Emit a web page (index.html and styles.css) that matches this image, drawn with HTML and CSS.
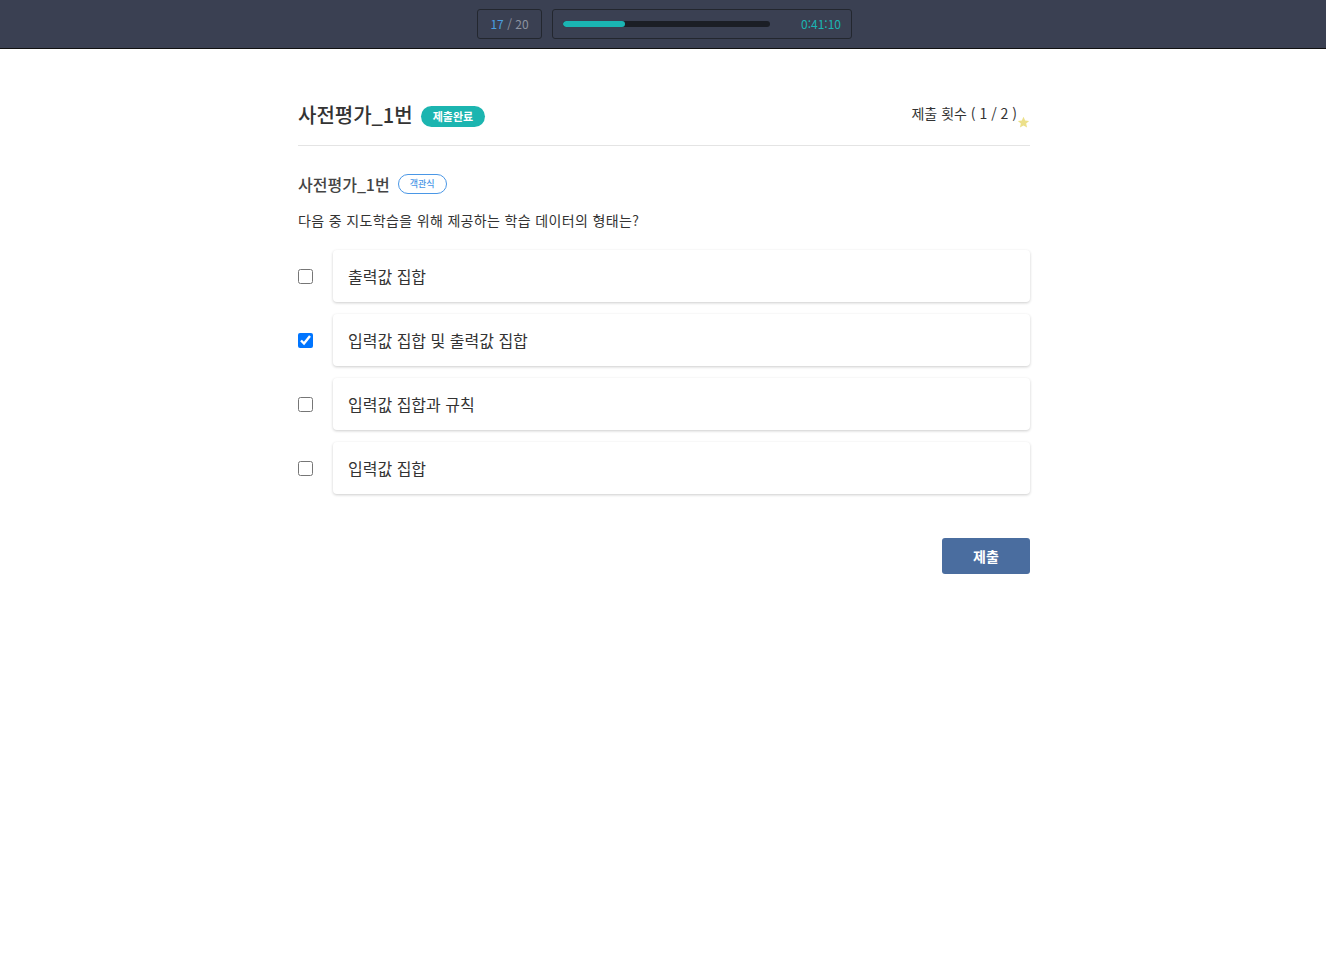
FILE: index.html
```html
<!DOCTYPE html>
<html lang="ko">
<head>
<meta charset="utf-8">
<link rel="stylesheet" href="styles.css">
</head>
<body>
<header class="topbar">
  <div class="counter"><span class="cur">17</span> / 20</div>
  <div class="progress">
    <div class="track"><div class="fill" style="width:30%"></div></div>
    <span class="timer">0:41:10</span>
  </div>
</header>
<main class="page">
  <div class="head">
    <div class="title-wrap">
      <h1 class="title">사전평가_1번</h1>
      <span class="badge-done">제출완료</span>
    </div>
    <div class="attempts">제출 횟수 ( 1 / 2 )<svg class="star" width="13" height="13" viewBox="0 0 24 24"><path d="M12 1.5l3.1 7 7.4.6-5.6 4.9 1.7 7.4L12 17.5l-6.6 3.9 1.7-7.4L1.5 9.1l7.4-.6z" fill="#ece08a"/></svg></div>
  </div>
  <section class="question">
    <div class="q-head">
      <h2 class="q-title">사전평가_1번</h2>
      <span class="badge-type">객관식</span>
    </div>
    <p class="q-text">다음 중 지도학습을 위해 제공하는 학습 데이터의 형태는?</p>
    <ul class="options">
      <li class="option"><input type="checkbox" class="chk"><div class="card">출력값 집합</div></li>
      <li class="option"><input type="checkbox" class="chk" checked><div class="card">입력값 집합 및 출력값 집합</div></li>
      <li class="option"><input type="checkbox" class="chk"><div class="card">입력값 집합과 규칙</div></li>
      <li class="option"><input type="checkbox" class="chk"><div class="card">입력값 집합</div></li>
    </ul>
    <div class="actions"><button class="submit">제출</button></div>
  </section>
</main>
</body>
</html>
```
FILE: styles.css
```css
* { box-sizing: border-box; }
body {
  margin: 0;
  padding-left: 2px;
  font-family: "Noto Sans CJK KR", "Noto Sans", sans-serif;
  color: #333;
  background: #fff;
}
.topbar {
  height: 49px;
  margin-left: -2px;
  background: #3a4052;
  border-bottom: 1px solid #111;
  display: flex;
  justify-content: center;
  align-items: flex-start;
  padding-top: 9px;
  padding-left: 3px;
  gap: 10px;
}
.counter {
  width: 65px;
  height: 30px;
  border: 1px solid #23272f;
  border-radius: 3px;
  color: #8d93a0;
  font-size: 12px;
  display: flex;
  align-items: center;
  justify-content: center;
  padding-bottom: 1px;
  white-space: pre;
}
.counter .cur { color: #4a9fe0; }
.progress {
  width: 300px;
  height: 30px;
  border: 1px solid #23272f;
  border-radius: 3px;
  display: flex;
  align-items: center;
  padding: 0 10px 1px 10px;
}
.track {
  width: 207px;
  height: 6px;
  background: #1b1e25;
  border-radius: 3px;
  overflow: hidden;
}
.fill {
  height: 100%;
  background: #1ab5b3;
  border-radius: 3px;
}
.timer {
  margin-left: auto;
  color: #1ab5b3;
  font-size: 12px;
}
.page {
  width: 732px;
  margin: 0 auto;
  padding-top: 51px;
}
.head {
  display: flex;
  justify-content: space-between;
  align-items: flex-end;
  padding-bottom: 15px;
  border-bottom: 1px solid #e4e4e4;
}
.title-wrap { display: flex; align-items: center; gap: 8px; }
.title {
  margin: 0;
  font-size: 20px;
  font-weight: 500;
  color: #333;
  line-height: 30px;
}
.badge-done {
  background: #1cb5b0;
  color: #fff;
  font-size: 11px;
  font-weight: 700;
  height: 21px;
  line-height: 21px;
  padding: 0 12px;
  border-radius: 11px;
  margin-top: 3px;
}
.attempts {
  font-size: 14px;
  color: #333;
  display: flex;
  align-items: flex-end;
  line-height: 20px;
  padding-bottom: 7px;
}
.star { margin-bottom: -6px; }
.question { padding-top: 26px; }
.q-head { display: flex; align-items: center; gap: 8px; }
.q-title {
  margin: 0;
  font-size: 16px;
  font-weight: 500;
  color: #444;
  line-height: 24px;
}
.badge-type {
  border: 1px solid #4a97e6;
  color: #4a97e6;
  font-size: 9px;
  font-weight: 500;
  height: 20px;
  line-height: 18px;
  padding: 0 11px;
  border-radius: 10px;
}
.q-text {
  margin: 14px 0 0;
  font-size: 14px;
  letter-spacing: 0.35px;
  color: #333;
  line-height: 20px;
}
.options {
  list-style: none;
  margin: 20px 0 0;
  padding: 0;
  display: flex;
  flex-direction: column;
  gap: 12px;
}
.option { display: flex; align-items: center; gap: 20px; }
.chk {
  width: 15px;
  height: 15px;
  margin: 0;
  flex: none;
}
.card {
  flex: 1;
  height: 52px;
  background: #fff;
  border-radius: 4px;
  box-shadow: 0 1px 3px rgba(0,0,0,0.2);
  display: flex;
  align-items: center;
  padding-left: 15px;
  font-size: 16px;
  color: #333;
}
.actions {
  display: flex;
  justify-content: flex-end;
  margin-top: 44px;
}
.submit {
  width: 88px;
  height: 36px;
  border: none;
  border-radius: 3px;
  background: #4a6d9f;
  color: #fff;
  font-family: inherit;
  font-size: 14px;
  font-weight: 700;
}
```
